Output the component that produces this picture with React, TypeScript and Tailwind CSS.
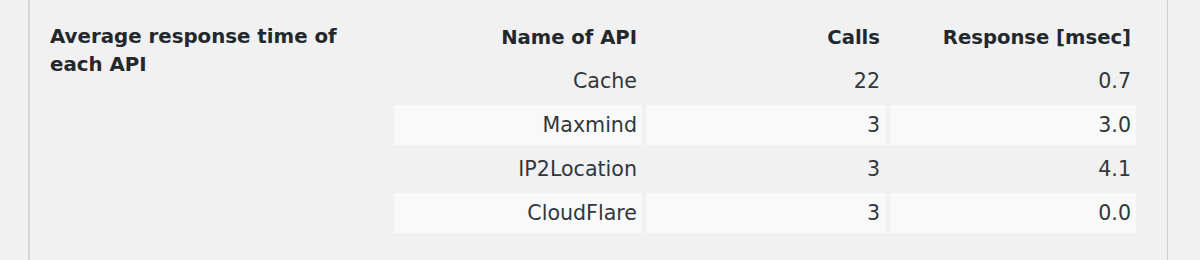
import React from "react";

const rows = [
  { name: "Cache", calls: "22", resp: "0.7", alt: false },
  { name: "Maxmind", calls: "3", resp: "3.0", alt: true },
  { name: "IP2Location", calls: "3", resp: "4.1", alt: false },
  { name: "CloudFlare", calls: "3", resp: "0.0", alt: true },
];

export default function App() {
  return (
    <div
      className="w-[1200px] h-[260px] bg-[#f1f1f1] overflow-hidden"
      style={{ fontFamily: '"DejaVu Sans", "Liberation Sans", sans-serif' }}
    >
      <div className="ml-[28px] w-[1140px] h-full border-l-2 border-r border-l-[#d6d6d6] border-r-[#cfcfcf] flex">
        <div className="w-[364px] pl-[20px] pt-[23px] text-[19.8px] leading-[28px] font-bold text-[#23282d]">
          Average response time of each API
        </div>
        <div className="pt-[17px]">
          <div className="grid grid-cols-[248px_240px_246px] gap-x-[4px] gap-y-[4px] text-[20.6px] text-right">
            <div className="h-[40px] flex items-center justify-end pr-[5px] pt-[2px] text-[19.6px] font-bold text-[#23282d]">Name of API</div>
            <div className="h-[40px] flex items-center justify-end pr-[6px] pt-[2px] text-[19.6px] font-bold text-[#23282d]">Calls</div>
            <div className="h-[40px] flex items-center justify-end pr-[5px] pt-[2px] text-[19.6px] font-bold text-[#23282d]">Response [msec]</div>
            {rows.map((r) => (
              <React.Fragment key={r.name}>
                <div className={`h-[40px] flex items-center justify-end pr-[5px] text-[#32373c] ${r.alt ? "bg-[#f9f9f9]" : ""}`}>{r.name}</div>
                <div className={`h-[40px] flex items-center justify-end pr-[6px] text-[#32373c] ${r.alt ? "bg-[#f9f9f9]" : ""}`}>{r.calls}</div>
                <div className={`h-[40px] flex items-center justify-end pr-[5px] text-[#32373c] ${r.alt ? "bg-[#f9f9f9]" : ""}`}>{r.resp}</div>
              </React.Fragment>
            ))}
          </div>
        </div>
      </div>
    </div>
  );
}
